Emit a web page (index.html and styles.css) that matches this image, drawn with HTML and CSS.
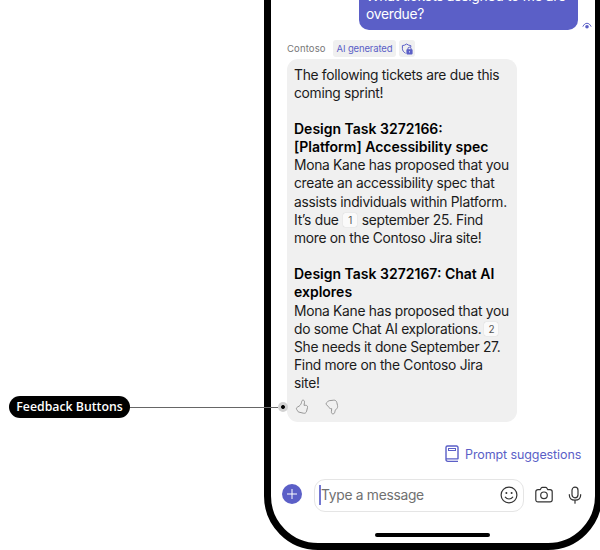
FILE: index.html
```html
<!DOCTYPE html>
<html lang="en">
<head>
<meta charset="utf-8">
<title>Contoso chat</title>
<link rel="stylesheet" href="styles.css">
</head>
<body>
<main class="stage">
  <section class="phone">
    <div class="sent-row">
      <div class="sent">What tickets assigned to me are<br>overdue?</div>
      <svg class="seen" viewBox="0 0 10 8"><path d="M1 4.300C2 2.200 3.400 1.300 5 1.300s3 .9 4 3" fill="none" stroke="#5b5fc7" stroke-linecap="round"/><circle cx="5" cy="4.800" r="1.800" fill="#5b5fc7"/></svg>
    </div>
    <div class="meta">
      <span class="sender">Contoso</span>
      <span class="badge">AI generated</span>
      <span class="badge shield"><svg viewBox="0 0 12 12"><path d="M4.600 10.200C2.500 9.100 1.400 7.600 1.400 5.300V2.600C3 2.500 4.300 2 5.600 1c1.300 1 2.600 1.500 4.200 1.600v1.600" fill="none" stroke="#5b5fc7"/><rect x="5.400" y="6.200" width="6.200" height="5.200" rx=".8" fill="#5b5fc7"/><path d="M6.900 7V5.800a1.600 1.600 0 0 1 3.200 0V7" fill="none" stroke="#5b5fc7"/><circle cx="8.500" cy="8.800" r=".6" fill="#fff"/></svg></span>
    </div>
    <article class="reply">
      <p>The following tickets are due this<br>coming sprint!</p>
      <h2>Design Task 3272166:<br>[Platform] Accessibility spec</h2>
      <p>Mona Kane has proposed that you<br>create an accessibility spec that<br>assists individuals within Platform.<br>It’s due <span class="cite">1</span> september 25. Find<br>more on the Contoso Jira site!</p>
      <h2>Design Task 3272167: Chat AI<br>explores</h2>
      <p>Mona Kane has proposed that you<br>do some Chat AI explorations.<span class="cite tight">2</span><br>She needs it done September 27.<br>Find more on the Contoso Jira<br>site!</p>
      <div class="feedback">
        <svg viewBox="0 0 14 16"><path d="M7.600 1.200c1.400-.3 2 .8 1.900 2.100L9 6.300h1.700c1.400 0 2.100 1 1.800 2.200l-.9 3.700c-.4 1.600-1.600 2.400-3.200 2l-4.500-1.100c-.7-.2-1-.5-1.300-1.100l-.4-.8c-.3-.5-.8-.8-.8-1.500 0-.9.6-1.400 1.300-1.800C4.900 7 5.700 5.700 6.300 4.200c.4-1 .3-2.800 1.300-3z"/></svg>
        <svg viewBox="0 0 14 16"><path d="M8.300 14.800c-1.400.3-2-.8-1.900-2.100L6.700 9.700C5 9.700 4.100 9 3.600 7.900L1.500 5.700C.9 4.800 1.200 4 1.900 3.600l.6-.7c.5-.8 1-1.100 1.700-1.200l4.500-.5c1.600-.2 2.700.7 3.100 2.200l.7 3c.4 1.700-.1 2.700-1.200 3.700C9.900 11.300 10.200 12 9.600 13.700c-.2.700-.6 1-1.300 1.100z"/></svg>
      </div>
    </article>
    <div class="prompts">
      <svg viewBox="0 0 14 18"><path d="M13 14.300V2.500A1.500 1.500 0 0 0 11.500 1h-9A1.500 1.500 0 0 0 1 2.500v12A1.800 1.800 0 0 0 2.800 16.400H13M1 13.900h12" stroke-width="1.400"/><rect x="3.500" y="3.500" width="7" height="2" stroke-width="1"/></svg>
      <span>Prompt suggestions</span>
    </div>
    <div class="composer">
      <span class="plus"><svg viewBox="0 0 20 20"><path d="M10 5v10M5 10h10"/></svg></span>
      <div class="field">
        <span class="caret"></span><span class="hint">Type a message</span>
        <svg class="line smile" viewBox="0 0 18 18"><circle cx="9" cy="9" r="7.900"/><path d="M5.300 11.200c1.800 2.400 5.600 2.400 7.400 0"/><g fill="#333" stroke="none"><circle cx="6.400" cy="7.100" r="1"/><circle cx="11.600" cy="7.100" r="1"/></g></svg>
      </div>
      <svg class="line camera" viewBox="0 0 18 18"><path d="M3 3.700h2.200l1-1.700c.3-.5.7-.7 1.200-.7h3.200c.5 0 .9.200 1.200.7l1 1.700H15c1.300 0 2.200.8 2.200 2.100v8c0 1.300-.9 2.100-2.200 2.100H3c-1.300 0-2.200-.8-2.200-2.100v-8c0-1.300.9-2.100 2.200-2.100z"/><circle cx="9" cy="9.300" r="3.300"/></svg>
      <svg class="line mic" viewBox="0 0 14 18"><rect x="4" y="1.200" width="6" height="10.600" rx="3"/><path d="M1.300 8.700c0 3.500 2.300 5.500 5.700 5.500s5.700-2 5.700-5.500M7 14.200v3"/></svg>
    </div>
    <div class="home"></div>
  </section>
  <div class="callout"><span class="pill">Feedback Buttons</span><span class="leader"></span><span class="dot"></span></div>
</main>
</body>
</html>
```
FILE: styles.css
```css
* { box-sizing: border-box; }
body { margin: 0; background: #fff; font-family: Inter, "Liberation Sans", sans-serif; color: #1b1b1b; }
svg { display: block; flex: none; }
.stage { position: relative; width: 600px; height: 550px; overflow: hidden; display: flex; align-items: flex-end; }
.phone { width: 338px; height: 610px; margin-left: 264px; flex: none; border: 7px solid #000; border-radius: 54px; padding-top: 37px; display: flex; flex-direction: column; }
.sent-row { display: flex; align-items: flex-end; height: 46px; padding-left: 88px; flex: none; }
.sent { width: 219px; height: 46px; background: #5b5fc7; color: #fff; border-radius: 10px; padding: 3px 7px 0; font-size: 13.8px; letter-spacing: -.28px; line-height: 18px; white-space: nowrap; }
.seen { width: 10px; height: 8px; margin: 0 0 0 4px; }
.meta { display: flex; align-items: center; height: 17px; margin: 10px 0 2px 16px; font-size: 9.5px; color: #777; flex: none; }
.sender { width: 46px; letter-spacing: .15px; }
.badge { width: 63px; height: 17px; line-height: 17px; background: #f0f0f0; color: #5b5fc7; border-radius: 3px; text-align: center; white-space: nowrap; letter-spacing: -.15px; }
.shield { width: 16px; margin-left: 3px; display: grid; place-items: center; }
.shield svg { width: 12px; height: 12px; }
.reply { width: 230px; height: 363px; margin-left: 16px; padding: 6.500px 7px 0; background: #f0f0f0; border-radius: 11px; font-size: 13.8px; letter-spacing: -.28px; line-height: 18.150px; white-space: nowrap; flex: none; }
.reply p, .reply h2 { margin: 0; }
.reply h2 { margin-top: 18.150px; font-size: 14px; letter-spacing: 0; font-weight: 600; color: #000; }
.cite { display: inline-block; width: 14px; height: 14px; line-height: 14px; margin: 0 1px; border-radius: 2px; background: #fafafa; box-shadow: 0 0 1px #bbb; font-size: 10px; text-align: center; vertical-align: 1px; color: #555; }
.tight { margin-left: 3px; }
.feedback { display: flex; gap: 16px; margin: 7px 0 0 1px; }
.feedback svg { width: 14px; height: 16px; fill: none; stroke: #8c8c8c; stroke-width: .9; }
.prompts { display: flex; align-items: center; gap: 6px; height: 18px; margin: 23px 0 0 174px; color: #5b5fc7; font-size: 12.5px; letter-spacing: -.1px; white-space: nowrap; flex: none; }
.prompts svg { width: 14px; height: 18px; fill: none; stroke: #5b5fc7; }
.composer { display: flex; align-items: center; height: 33px; margin: 16px 0 0 11px; flex: none; }
.plus { width: 20px; height: 20px; border-radius: 50%; background: #5b5fc7; margin-top: -3px; }
.plus svg { stroke: #fff; stroke-width: 1; }
.field { display: flex; align-items: center; width: 210px; height: 33px; margin-left: 12px; padding: 0 0 1px 4px; border: 1px solid #e5e5e5; border-radius: 11px; }
.caret { width: 2px; height: 20px; background: #7377d1; }
.hint { font-size: 13.8px; letter-spacing: -.28px; color: #707070; width: 179px; white-space: nowrap; }
.line { fill: none; stroke: #333; stroke-width: 1.2; stroke-linecap: round; stroke-linejoin: round; }
.smile, .camera { width: 18px; height: 18px; }
.camera { margin: -1px 0 0 11px; }
.mic { width: 14px; height: 18px; margin: -2px 0 0 15px; }
.home { width: 115px; height: 4px; margin: 21px 0 0 104px; border-radius: 2px; background: #000; flex: none; }
.callout { position: absolute; left: 9px; top: 396px; width: 290px; height: 22px; display: flex; align-items: center; }
.pill { width: 121px; height: 22px; border-radius: 11px; background: #000; color: #fff; font: 600 12.3px/22px "Open Sans", sans-serif; text-align: center; white-space: nowrap; }
.leader { width: 148px; height: 1px; background: #666; }
.dot { width: 10px; height: 10px; border-radius: 50%; background: radial-gradient(circle, #000 0 1.5px, #d2d2d2 2.3px); }
```
